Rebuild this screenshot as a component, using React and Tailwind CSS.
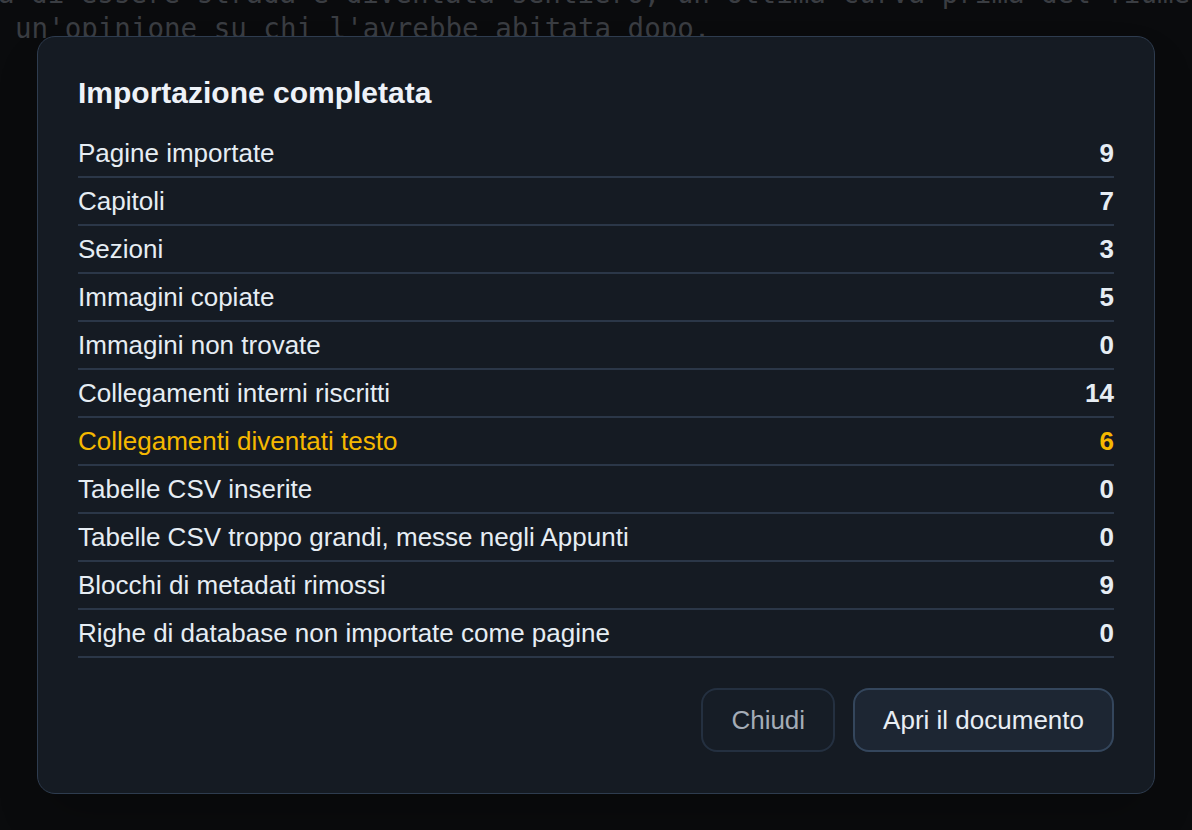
const righe = [
  ["Pagine importate", 9],
  ["Capitoli", 7],
  ["Sezioni", 3],
  ["Immagini copiate", 5],
  ["Immagini non trovate", 0],
  ["Collegamenti interni riscritti", 14],
  ["Collegamenti diventati testo", 6, true],
  ["Tabelle CSV inserite", 0],
  ["Tabelle CSV troppo grandi, messe negli Appunti", 0],
  ["Blocchi di metadati rimossi", 9],
  ["Righe di database non importate come pagine", 0],
];

export default function App() {
  return (
    <div className="relative w-[1192px] h-[830px] overflow-hidden bg-[#0a0b0d]">
      {/* testo dell'editor sotto, oscurato */}
      <div className="absolute left-[15px] top-[-24px] text-[27.5px] leading-[35px] text-[#3a3d42] whitespace-nowrap"
        style={{ fontFamily: '"DejaVu Sans Mono", monospace' }}>
        <p className="ml-[-17px]">a di essere strada e diventata sentiero, un'ottima curva prima del fiume</p>
        <p>un'opinione su chi l'avrebbe abitata dopo.</p>
      </div>

      <div className="absolute left-[37px] top-[36px] w-[1118px] h-[758px] rounded-[18px] border border-[#2e3c4f] bg-[#151b23] px-[40px] pt-[38px] pb-[41px] flex flex-col shadow-2xl"
        style={{ fontFamily: '"Liberation Sans", Arial, sans-serif' }}>
        <h2 className="text-[30px] leading-[36px] font-bold text-[#eef2f8] mb-[19px]">Importazione completata</h2>

        <div className="flex flex-col">
          {righe.map(([nome, n, avviso]) => (
            <div key={nome} className={`flex items-center justify-between h-[48px] border-b-2 border-[#2b3748] text-[26px] ${avviso ? "text-[#f5b800]" : "text-[#e6edf3]"}`}>
              <span>{nome}</span>
              <span className="font-bold">{n}</span>
            </div>
          ))}
        </div>

        <div className="mt-auto flex justify-end gap-[18px]">
          <button className="h-[64px] px-[28px] rounded-[16px] border-2 border-[#243040] bg-[#161d26] text-[26px] text-[#a4acb6]">
            Chiudi
          </button>
          <button className="h-[64px] px-[28px] rounded-[16px] border-2 border-[#34465c] bg-[#1d2633] text-[26px] text-[#e8edf3]">
            Apri il documento
          </button>
        </div>
      </div>
    </div>
  );
}
